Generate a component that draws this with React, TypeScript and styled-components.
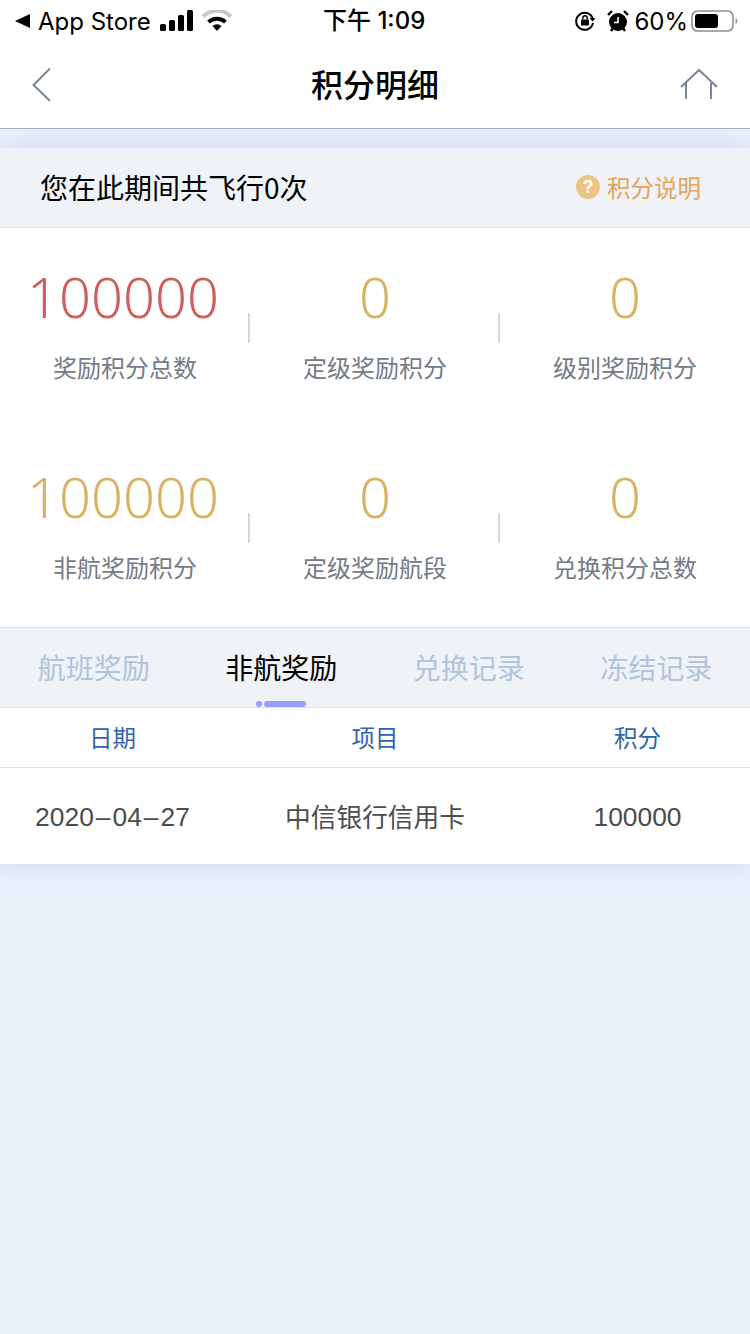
import React from 'react';
import styled, { createGlobalStyle } from 'styled-components';

const cjk = '"Noto Sans CJK SC", "Noto Sans", sans-serif';

const GlobalStyle = createGlobalStyle`
  html, body {
    margin: 0;
    padding: 0;
    background: #eaf1fb;
  }
  body {
    font-family: "Liberation Sans", ${cjk};
  }
`;

const Page = styled.div`
  width: 750px;
  height: 1334px;
  overflow: hidden;
  background: #eaf1fb;
`;

const Header = styled.header`
  height: 128px;
  background: #fff;
  border-bottom: 1px solid #a9b0bc;
`;

const StatusBar = styled.div`
  height: 42px;
  padding: 0 12px 0 14px;
  display: flex;
  align-items: center;
  justify-content: space-between;
  position: relative;
  color: #000;
`;

const StatusGroup = styled.div`
  display: flex;
  align-items: center;
`;

const StatusText = styled.span`
  font-family: Inter, "Liberation Sans", sans-serif;
  font-size: 24px;
`;

const Clock = styled.span`
  position: absolute;
  left: 323px;
  top: 5px;
  font-family: Inter, ${cjk};
  font-size: 24px;
  font-weight: 500;
  line-height: 32px;
`;

const NavBar = styled.div`
  height: 86px;
  padding: 0 32px;
  display: grid;
  grid-template-columns: 1fr auto 1fr;
  align-items: center;
`;

const NavRight = styled.div`
  display: flex;
  justify-content: flex-end;
`;

const Title = styled.h1`
  margin: 0 0 4px;
  font-family: ${cjk};
  font-size: 32px;
  font-weight: 500;
  color: #000;
`;

const Card = styled.section`
  margin-top: 19px;
  background: #fff;
  box-shadow: 0 0 24px rgba(120, 140, 180, 0.26);
`;

const FlightBar = styled.div`
  height: 80px;
  padding: 0 49px 2px 40px;
  box-sizing: border-box;
  display: flex;
  align-items: center;
  justify-content: space-between;
  background: #eff2f6;
  border-bottom: 1px solid #dcdfe3;
`;

const FlightText = styled.span`
  font-family: ${cjk};
  font-size: 28px;
  color: #000;
`;

const Help = styled.span`
  display: flex;
  align-items: center;
  gap: 7px;
  font-family: ${cjk};
  font-size: 23.5px;
  color: #e5a35f;
`;

const HelpDot = styled.span`
  width: 24px;
  height: 24px;
  border-radius: 50%;
  background: #ebc585;
  color: #fff;
  font-family: "Liberation Sans", sans-serif;
  font-size: 18px;
  font-weight: 700;
  line-height: 24px;
  text-align: center;
`;

const StatsGrid = styled.div`
  height: 399px;
  display: grid;
  grid-template-columns: repeat(3, 1fr);
  grid-template-rows: 200px 198px;
  border-bottom: 1px solid #dcdfe3;
`;

const StatCell = styled.div<{ $divider: boolean }>`
  position: relative;
  padding-top: 34px;
  text-align: center;
  &::after {
    content: '';
    display: ${(p) => (p.$divider ? 'block' : 'none')};
    position: absolute;
    right: 0;
    top: 85px;
    width: 2px;
    height: 30px;
    background: #d5d8dc;
  }
`;

const StatValue = styled.div<{ $color: string; $long: boolean }>`
  padding-right: ${(p) => (p.$long ? '4px' : '0')};
  font-family: "Noto Sans", sans-serif;
  font-size: 56px;
  font-weight: 300;
  line-height: 68px;
  color: ${(p) => p.$color};
`;

const StatLabel = styled.div`
  margin-top: 20px;
  font-family: ${cjk};
  font-size: 24px;
  line-height: 34px;
  color: #747b85;
`;

const TabBar = styled.div`
  height: 80px;
  box-sizing: border-box;
  display: grid;
  grid-template-columns: repeat(4, 187.5px);
  background: #eff2f6;
  border-bottom: 1px solid #dcdfe3;
`;

const Tab = styled.div<{ $active: boolean }>`
  position: relative;
  padding-top: 19px;
  text-align: center;
  font-family: ${cjk};
  font-size: 28px;
  line-height: 40px;
  color: ${(p) => (p.$active ? '#000' : '#b1c4dc')};
`;

const Indicator = styled.span`
  position: absolute;
  left: 68px;
  bottom: 0;
  display: flex;
  gap: 2px;
`;

const IndicatorDot = styled.i`
  width: 6px;
  height: 6px;
  border-radius: 50%;
  background: #979dfb;
`;

const IndicatorBar = styled.i`
  width: 42px;
  height: 6px;
  border-radius: 3px;
  background: #979dfb;
`;

const TableRow = styled.div<{ $head?: boolean }>`
  height: ${(p) => (p.$head ? '60px' : '96px')};
  box-sizing: border-box;
  padding-bottom: 2px;
  display: grid;
  grid-template-columns: 225px 300px 225px;
  align-items: center;
  text-align: center;
  font-family: ${cjk};
  font-size: ${(p) => (p.$head ? '23.5px' : '25.7px')};
  color: ${(p) => (p.$head ? '#2f64ac' : '#4c4c4c')};
  border-bottom: ${(p) => (p.$head ? '1px solid #dcdfe3' : 'none')};
`;

const Numeric = styled.span`
  margin-top: 4px;
  font-family: "Liberation Sans", sans-serif;
  font-size: 26.4px;
`;

const DateDash = styled.span`
  padding: 0 2px;
`;

const statCells = [
  { value: '100000', label: '奖励积分总数', color: '#cf5f5f' },
  { value: '0', label: '定级奖励积分', color: '#d8b366' },
  { value: '0', label: '级别奖励积分', color: '#d8b366' },
  { value: '100000', label: '非航奖励积分', color: '#d8b366' },
  { value: '0', label: '定级奖励航段', color: '#d8b366' },
  { value: '0', label: '兑换积分总数', color: '#d8b366' },
];

const tabs = ['航班奖励', '非航奖励', '兑换记录', '冻结记录'];

export default function App() {
  return (
    <Page>
      <GlobalStyle />
      <Header>
        <StatusBar>
          <StatusGroup>
            <svg width="17" height="16" viewBox="0 0 17 16" style={{ marginRight: 7 }}>
              <path d="M16 1v14L1 8z" fill="#000" />
            </svg>
            <StatusText>App Store</StatusText>
            <svg width="34" height="22" viewBox="0 0 34 22" style={{ marginLeft: 9 }}>
              <rect x="0" y="14" width="6" height="7" rx="1.5" />
              <rect x="9" y="10" width="6" height="11" rx="1.5" />
              <rect x="18" y="5" width="6" height="16" rx="1.5" />
              <rect x="27" y="0" width="6" height="21" rx="1.5" />
            </svg>
            <svg width="30" height="22" viewBox="0 0 30 22" style={{ marginLeft: 8 }}>
              <path d="M1 6.5a20 20 0 0 1 28 0" fill="none" stroke="#c9c9c9" strokeWidth="4" />
              <path d="M6.5 12a12.500 12.500 0 0 1 17 0" fill="none" stroke="#000" strokeWidth="4" />
              <path d="M10.500 16a6.500 6.500 0 0 1 9 0L15 21z" fill="#000" />
            </svg>
          </StatusGroup>
          <Clock>下午 1:09</Clock>
          <StatusGroup>
            <svg width="22" height="22" viewBox="0 0 22 22" fill="none" style={{ marginRight: 11 }}>
              <path d="M18.500 8A8.500 8.500 0 1 0 19 13" stroke="#000" strokeWidth="2" />
              <path d="M15.500 8h6l-3 3.500z" fill="#000" />
              <rect x="7" y="9.500" width="8" height="6" rx="1" fill="#000" />
              <path d="M8.800 9.500V8a2.200 2.200 0 0 1 4.400 0v1.500" stroke="#000" strokeWidth="1.400" />
            </svg>
            <svg width="22" height="24" viewBox="0 0 22 24" style={{ marginRight: 5 }}>
              <circle cx="11" cy="13" r="9" fill="#000" />
              <path d="M11 8v5.500H7" fill="none" stroke="#fff" strokeWidth="1.600" />
              <path d="M1 6l4-4M21 6l-4-4M4 22l2-3M18 22l-2-3" stroke="#000" strokeWidth="2.400" />
            </svg>
            <StatusText>60%</StatusText>
            <svg width="47" height="24" viewBox="0 0 47 24" style={{ marginLeft: 3 }}>
              <rect x="1" y="2" width="41" height="20" rx="5.500" fill="none" stroke="#8e8e8e" strokeWidth="1.600" />
              <rect x="4" y="5" width="23" height="14" rx="3" fill="#000" />
              <path d="M44.500 9c1.500.6 2 1.600 2 3s-.5 2.400-2 3z" fill="#9a9a9a" />
            </svg>
          </StatusGroup>
        </StatusBar>
        <NavBar>
          <svg width="20" height="36" viewBox="0 0 20 36" fill="none">
            <path d="M18 1.500 1.500 18 18 34" stroke="#7a8698" strokeWidth="2" />
          </svg>
          <Title>积分明细</Title>
          <NavRight>
            <svg width="38" height="32" viewBox="0 0 38 32" fill="none">
              <path d="M1 18 19 1l18 17" stroke="#7a8698" strokeWidth="2" />
              <path d="M6 14v16M31 14v16" stroke="#7a8698" strokeWidth="2" />
            </svg>
          </NavRight>
        </NavBar>
      </Header>
      <Card>
        <FlightBar>
          <FlightText>您在此期间共飞行0次</FlightText>
          <Help>
            <HelpDot>?</HelpDot>
            积分说明
          </Help>
        </FlightBar>
        <StatsGrid>
          {statCells.map((cell, i) => (
            <StatCell key={cell.label} $divider={i % 3 !== 2}>
              <StatValue $color={cell.color} $long={cell.value.length > 1}>
                {cell.value}
              </StatValue>
              <StatLabel>{cell.label}</StatLabel>
            </StatCell>
          ))}
        </StatsGrid>
        <TabBar>
          {tabs.map((tab, i) => (
            <Tab key={tab} $active={i === 1}>
              {tab}
              {i === 1 && (
                <Indicator>
                  <IndicatorDot />
                  <IndicatorBar />
                </Indicator>
              )}
            </Tab>
          ))}
        </TabBar>
        <TableRow $head>
          <span>日期</span>
          <span>项目</span>
          <span>积分</span>
        </TableRow>
        <TableRow>
          <Numeric>
            2020<DateDash>–</DateDash>04<DateDash>–</DateDash>27
          </Numeric>
          <span>中信银行信用卡</span>
          <Numeric>100000</Numeric>
        </TableRow>
      </Card>
    </Page>
  );
}
